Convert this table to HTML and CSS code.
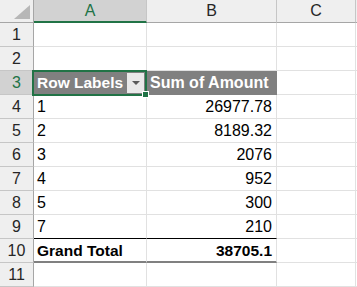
FILE: index.html
```html
<!DOCTYPE html>
<html lang="en">
<head>
  <meta charset="UTF-8">
  <title>Pivot Table</title>
  <link rel="stylesheet" href="styles.css">
</head>
<body>
  <div class="sheet">
    <!-- column headers -->
    <div class="corner"><span class="corner-tri"></span></div>
    <div class="col-head col-selected">A</div>
    <div class="col-head">B</div>
    <div class="col-head">C</div>
    <div class="col-head col-rest"></div>

    <div class="row-head">1</div>
    <div class="cell"></div><div class="cell"></div><div class="cell"></div><div class="cell rest"></div>

    <div class="row-head">2</div>
    <div class="cell"></div><div class="cell"></div><div class="cell"></div><div class="cell rest"></div>

    <div class="row-head row-selected">3</div>
    <div class="cell pivot-head active">
      <span>Row Labels</span>
      <span class="filter-btn"><span class="filter-arrow"></span></span>
      <span class="selection"><span class="handle"></span></span>
    </div>
    <div class="cell pivot-head">Sum of Amount</div>
    <div class="cell"></div><div class="cell rest"></div>

    <div class="row-head">4</div>
    <div class="cell">1</div><div class="cell num">26977.78</div><div class="cell"></div><div class="cell rest"></div>

    <div class="row-head">5</div>
    <div class="cell">2</div><div class="cell num">8189.32</div><div class="cell"></div><div class="cell rest"></div>

    <div class="row-head">6</div>
    <div class="cell">3</div><div class="cell num">2076</div><div class="cell"></div><div class="cell rest"></div>

    <div class="row-head">7</div>
    <div class="cell">4</div><div class="cell num">952</div><div class="cell"></div><div class="cell rest"></div>

    <div class="row-head">8</div>
    <div class="cell">5</div><div class="cell num">300</div><div class="cell"></div><div class="cell rest"></div>

    <div class="row-head">9</div>
    <div class="cell above-total">7</div><div class="cell num above-total">210</div><div class="cell"></div><div class="cell rest"></div>

    <div class="row-head">10</div>
    <div class="cell total">Grand Total</div><div class="cell num total">38705.1</div><div class="cell"></div><div class="cell rest"></div>

    <div class="row-head">11</div>
    <div class="cell"></div><div class="cell"></div><div class="cell"></div><div class="cell rest"></div>
  </div>
</body>
</html>
```

FILE: styles.css
```css
:root {
  --grid: #e1e1e1;
  --head-bg: #efefef;
  --head-line: #c6c6c6;
  --head-edge: #a6a6a6;
  --selected-bg: #d2d2d2;
  --green: #217346;
  --pivot: #808080;
}

body {
  margin: 0;
  background: #fff;
  font-family: "Liberation Sans", Arial, sans-serif;
  font-size: 16px;
  color: #000;
  overflow: hidden;
}

.sheet {
  display: grid;
  grid-template-columns: 34px 113px 130px 79px 1fr;
  grid-template-rows: 23px;
  grid-auto-rows: 24px;
  width: 357px;
}

.sheet > div {
  box-sizing: border-box;
}

.corner {
  position: relative;
  background: var(--head-bg);
  border-right: 1px solid var(--head-edge);
  border-bottom: 1px solid var(--head-edge);
}

.corner-tri {
  position: absolute;
  right: 3px;
  bottom: 3px;
  width: 0;
  height: 0;
  border-left: 16px solid transparent;
  border-bottom: 14px solid #b7b7b7;
}

.col-head {
  background: var(--head-bg);
  border-right: 1px solid var(--head-line);
  border-bottom: 1px solid var(--head-edge);
  text-align: center;
  line-height: 22px;
  color: #262626;
}

.col-selected {
  background: var(--selected-bg);
  border-bottom: 2px solid var(--green);
  color: var(--green);
}

.col-rest {
  border-right: none;
}

.row-head {
  background: var(--head-bg);
  border-right: 1px solid var(--head-edge);
  border-bottom: 1px solid var(--head-line);
  text-align: center;
  line-height: 24px;
  color: #262626;
}

.row-selected {
  background: var(--selected-bg);
  color: var(--green);
}

.cell {
  border-right: 1px solid var(--grid);
  border-bottom: 1px solid var(--grid);
  padding: 0 3px;
  line-height: 24px;
  white-space: nowrap;
}

.cell.rest {
  border-right: none;
}

.num {
  text-align: right;
  padding-right: 4px;
}

.pivot-head {
  background: var(--pivot);
  color: #fff;
  font-weight: bold;
  border-right-color: var(--pivot);
  border-bottom-color: var(--pivot);
  overflow: hidden;
}

.active {
  position: relative;
  display: flex;
  justify-content: space-between;
  align-items: center;
  overflow: visible;
  font-size: 15.5px;
}

.filter-btn {
  display: flex;
  align-items: center;
  justify-content: center;
  width: 17px;
  height: 20px;
  margin-right: -1px;
  background: #e9e9e9;
}

.filter-arrow {
  width: 0;
  height: 0;
  border-left: 4px solid transparent;
  border-right: 4px solid transparent;
  border-top: 4px solid #5a5a5a;
}

/* active cell outline over A3 */
.selection {
  position: absolute;
  left: -2px;
  top: -1px;
  width: 115px;
  height: 26px;
  box-sizing: border-box;
  border: 2px solid var(--green);
}

.handle {
  position: absolute;
  right: -4px;
  bottom: -4px;
  width: 5px;
  height: 5px;
  background: var(--green);
  border: 1px solid #fff;
}

.above-total {
  border-bottom: 1px solid #000;
}

.total {
  font-weight: bold;
  font-size: 15.5px;
  border-bottom: 2px solid var(--pivot);
}
```
